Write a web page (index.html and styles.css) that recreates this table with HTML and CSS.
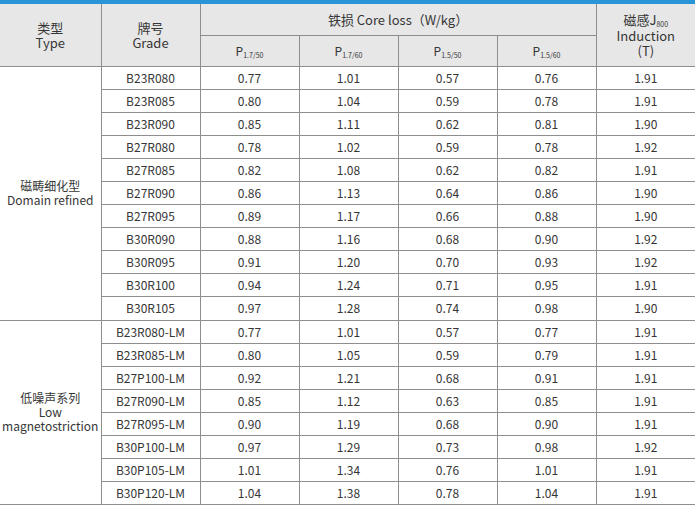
FILE: index.html
```html
<!DOCTYPE html>
<html lang="zh">
<head>
<meta charset="utf-8">
<title>Core loss table</title>
<link rel="stylesheet" href="styles.css">
</head>
<body>
<div class="topbar"></div>
<table class="spec">
  <colgroup>
    <col class="c-type"><col class="c-grade"><col class="c-val"><col class="c-val"><col class="c-val"><col class="c-val"><col class="c-val">
  </colgroup>
  <thead>
    <tr class="h1">
      <th rowspan="2" class="first">类型<br>Type</th>
      <th rowspan="2">牌号<br>Grade</th>
      <th colspan="4">铁损 Core loss（W/kg）</th>
      <th rowspan="2" class="last">磁感J<sub>800</sub><br>Induction<br>(T)</th>
    </tr>
    <tr class="h2">
      <th>P<sub>1.7/50</sub></th>
      <th>P<sub>1.7/60</sub></th>
      <th>P<sub>1.5/50</sub></th>
      <th>P<sub>1.5/60</sub></th>
    </tr>
  </thead>
  <tbody>
    <tr><td rowspan="11" class="first type">磁畴细化型<br>Domain refined</td><td>B23R080</td><td>0.77</td><td>1.01</td><td>0.57</td><td>0.76</td><td class="last">1.91</td></tr>
    <tr><td>B23R085</td><td>0.80</td><td>1.04</td><td>0.59</td><td>0.78</td><td class="last">1.91</td></tr>
    <tr><td>B23R090</td><td>0.85</td><td>1.11</td><td>0.62</td><td>0.81</td><td class="last">1.90</td></tr>
    <tr><td>B27R080</td><td>0.78</td><td>1.02</td><td>0.59</td><td>0.78</td><td class="last">1.92</td></tr>
    <tr><td>B27R085</td><td>0.82</td><td>1.08</td><td>0.62</td><td>0.82</td><td class="last">1.91</td></tr>
    <tr><td>B27R090</td><td>0.86</td><td>1.13</td><td>0.64</td><td>0.86</td><td class="last">1.90</td></tr>
    <tr><td>B27R095</td><td>0.89</td><td>1.17</td><td>0.66</td><td>0.88</td><td class="last">1.90</td></tr>
    <tr><td>B30R090</td><td>0.88</td><td>1.16</td><td>0.68</td><td>0.90</td><td class="last">1.92</td></tr>
    <tr><td>B30R095</td><td>0.91</td><td>1.20</td><td>0.70</td><td>0.93</td><td class="last">1.92</td></tr>
    <tr><td>B30R100</td><td>0.94</td><td>1.24</td><td>0.71</td><td>0.95</td><td class="last">1.91</td></tr>
    <tr><td>B30R105</td><td>0.97</td><td>1.28</td><td>0.74</td><td>0.98</td><td class="last">1.90</td></tr>
    <tr><td rowspan="8" class="first type">低噪声系列<br>Low<br>magnetostriction</td><td>B23R080-LM</td><td>0.77</td><td>1.01</td><td>0.57</td><td>0.77</td><td class="last">1.91</td></tr>
    <tr><td>B23R085-LM</td><td>0.80</td><td>1.05</td><td>0.59</td><td>0.79</td><td class="last">1.91</td></tr>
    <tr><td>B27P100-LM</td><td>0.92</td><td>1.21</td><td>0.68</td><td>0.91</td><td class="last">1.91</td></tr>
    <tr><td>B27R090-LM</td><td>0.85</td><td>1.12</td><td>0.63</td><td>0.85</td><td class="last">1.91</td></tr>
    <tr><td>B27R095-LM</td><td>0.90</td><td>1.19</td><td>0.68</td><td>0.90</td><td class="last">1.91</td></tr>
    <tr><td>B30P100-LM</td><td>0.97</td><td>1.29</td><td>0.73</td><td>0.98</td><td class="last">1.92</td></tr>
    <tr><td>B30P105-LM</td><td>1.01</td><td>1.34</td><td>0.76</td><td>1.01</td><td class="last">1.91</td></tr>
    <tr><td>B30P120-LM</td><td>1.04</td><td>1.38</td><td>0.78</td><td>1.04</td><td class="last">1.91</td></tr>
  </tbody>
</table>
</body>
</html>
```
FILE: styles.css
```css
html, body {
  margin: 0;
  padding: 0;
  background: #ffffff;
}
body {
  width: 695px;
  font-family: "Noto Sans CJK SC", "Noto Sans", sans-serif;
  color: #363636;
}
.topbar {
  height: 4px;
  background: #2a95d6;
}
.spec {
  width: 695px;
  border-collapse: collapse;
  table-layout: fixed;
  font-size: 12px;
}
.c-type { width: 101px; }
.c-grade { width: 99px; }
.c-val { width: 99px; }
.spec th,
.spec td {
  border: 1px solid #8e8e8e;
  padding: 0;
  text-align: center;
  vertical-align: middle;
  font-weight: normal;
}
.spec th {
  background: #e7e7e7;
  line-height: 15px;
  font-size: 13px;
}
.spec .first { border-left: none; }
.spec .last { border-right: none; }
.spec thead tr:first-child th { border-top: none; }
.h1 { height: 31px; }
.h2 { height: 31px; }
.h2 th { font-size: 12px; }
.spec tbody tr { height: 23.1px; }
.spec td { line-height: 14px; }
.spec td.type { line-height: 14px; }
sub {
  font-size: 7px;
  line-height: 7px;
  vertical-align: -2px;
}
```
